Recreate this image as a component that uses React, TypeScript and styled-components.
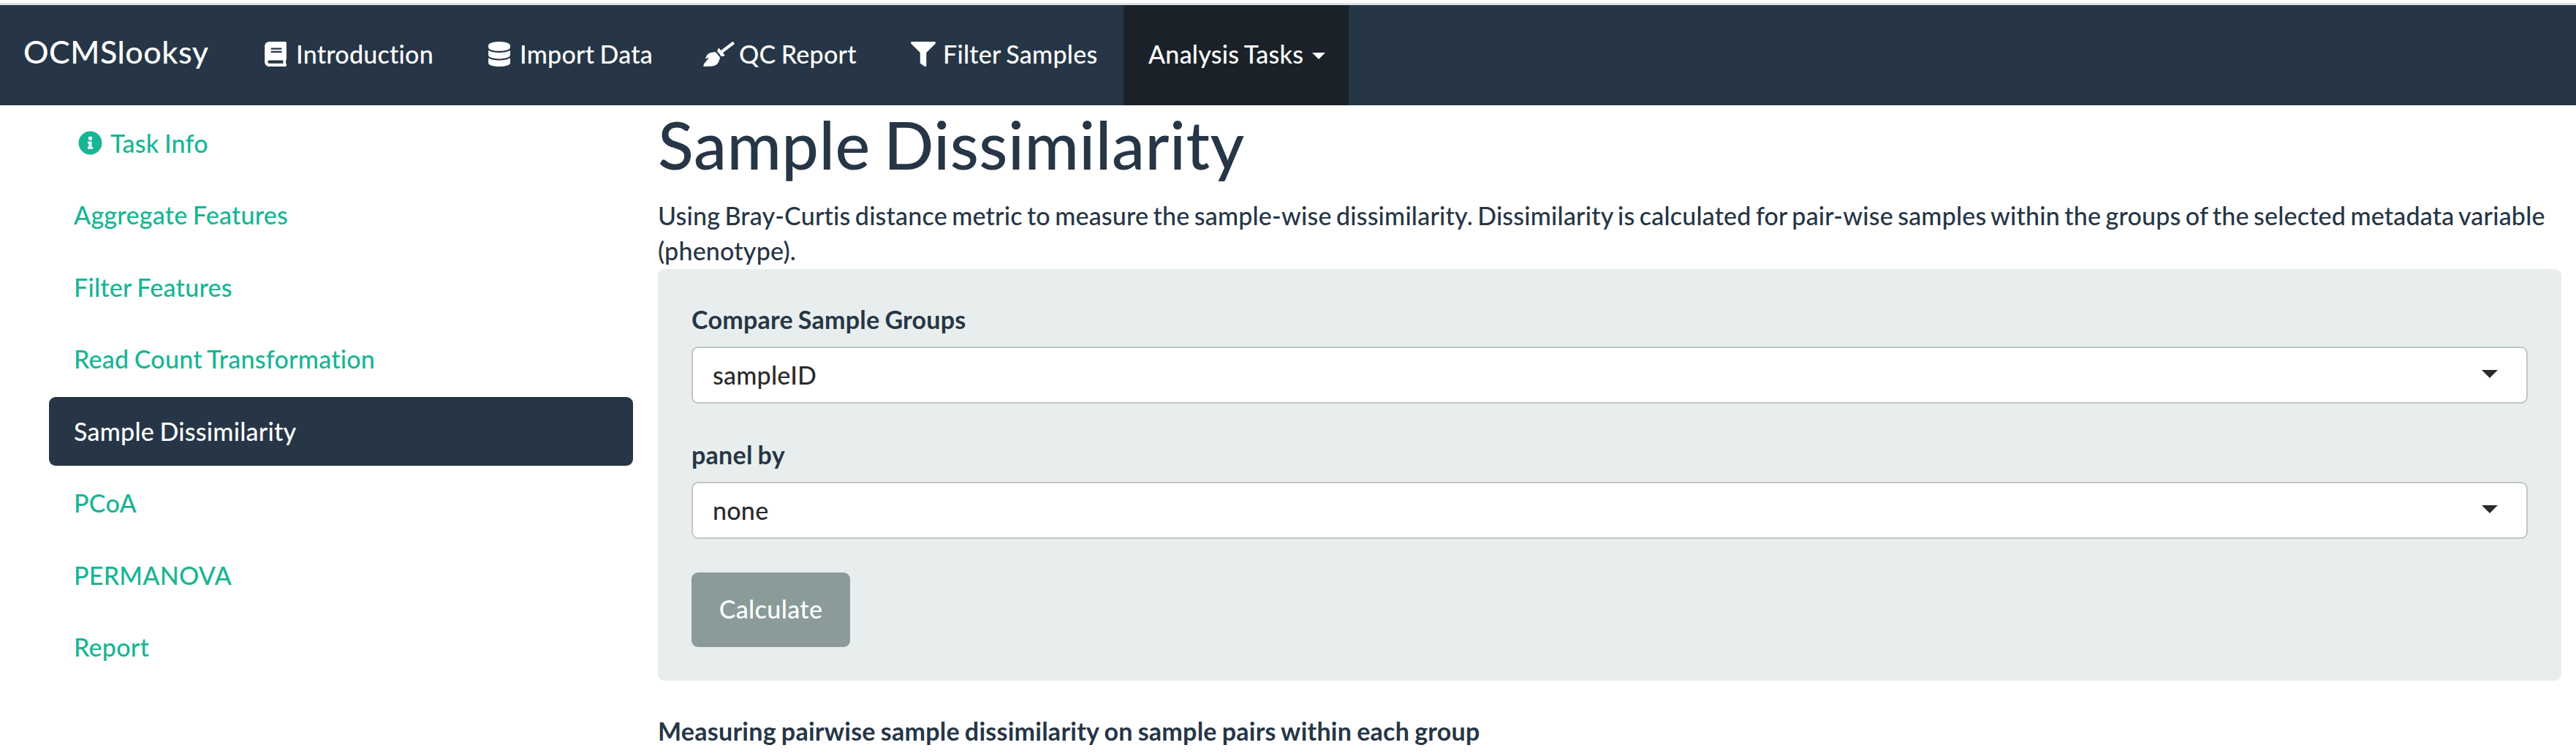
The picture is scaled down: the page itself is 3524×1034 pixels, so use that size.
import React from "react";
import styled, { createGlobalStyle, css } from "styled-components";
import { FaBook, FaBroom, FaDatabase, FaFilter, FaInfoCircle } from "react-icons/fa";

const GlobalStyle = createGlobalStyle`
  * { box-sizing: border-box; }
  body {
    margin: 0;
    background: #fff;
    color: #263646;
    font: 500 34px/48.4px Lato, "Liberation Sans", sans-serif;
    font-variant-ligatures: none;
    letter-spacing: 0.25px;
    word-spacing: -1.5px;
    overflow: hidden;
  }
`;

const TopEdge = styled.div`
  height: 7px;
  background: #fdfcfb;
  border-bottom: 3px solid #dcdfe3;
`;

const Navbar = styled.nav`
  display: flex;
  height: 137px;
  background: #263646;
  color: #fff;
`;

const Brand = styled.a`
  width: 328px;
  padding: 40px 0 0 32px;
  font-size: 43px;
  line-height: 48px;
  letter-spacing: 0.55px;
`;

const NavItem = styled.a<{ $width: number; $active?: boolean }>`
  display: flex;
  align-items: center;
  width: ${(p) => p.$width}px;
  padding: 0 0 3px 34px;
  white-space: nowrap;
  background: ${(p) => (p.$active ? "#1a2129" : "transparent")};
`;

const NavIcon = styled.span<{ $width: number; $gap: number }>`
  display: flex;
  margin-right: ${(p) => p.$gap}px;
  svg {
    display: block;
    width: ${(p) => p.$width}px;
    height: 34px;
  }
`;

const Caret = styled.span<{ $half: number; $height: number }>`
  margin-bottom: 3px;
  border-top: ${(p) => p.$height}px solid currentColor;
  border-left: ${(p) => p.$half}px solid transparent;
  border-right: ${(p) => p.$half}px solid transparent;
`;

const NavCaret = styled(Caret)`
  margin: 4px 0 0 12px;
`;

const Page = styled.div`
  display: grid;
  grid-template-columns: 799px 2604px;
  column-gap: 34px;
  padding-left: 67px;
`;

const Sidebar = styled.ul`
  display: flex;
  flex-direction: column;
  gap: 4.5px;
  margin: 0;
  padding: 5px 0 0;
  list-style: none;
`;

const SideItem = styled.li<{ $active?: boolean }>`
  display: flex;
  align-items: center;
  height: 94px;
  padding: 0 34px;
  border-radius: 9px;
  color: #18b594;
  ${(p) => p.$active && css`
    background: #263646;
    color: #fff;
  `}
`;

const InfoIcon = styled(FaInfoCircle)`
  width: 33px;
  height: 33px;
  margin: 0 11px 2px 6px;
`;

const Title = styled.h1`
  margin: 5px 0 25px;
  font-size: 90px;
  line-height: 97px;
  font-weight: 500;
  letter-spacing: 0.55px;
  word-spacing: -5px;
`;

const Description = styled.p`
  margin: 0;
  height: 97px;
  letter-spacing: 0.2px;
  word-spacing: -2.5px;
`;

const Well = styled.section`
  height: 563px;
  padding: 45px 46px;
  border-radius: 9px;
  background: #e8eeed;
`;

const Label = styled.label`
  display: block;
  height: 61px;
  font-weight: 700;
`;

const SelectBox = styled.div`
  display: flex;
  align-items: center;
  justify-content: space-between;
  height: 78px;
  margin-bottom: 46px;
  padding: 0 39px 0 27px;
  border: 2px solid #c3c5c5;
  border-radius: 9px;
  background: #fff;
  color: #2b2b2b;
`;

const SelectCaret = styled(Caret)`
  margin-bottom: 4px;
`;

const Button = styled.button`
  width: 217px;
  height: 102px;
  padding: 0 0 2px;
  border: 0;
  border-radius: 9px;
  background: #8a9b9a;
  color: #fff;
  font: inherit;
  letter-spacing: 0.4px;
`;

const Subheading = styled.strong`
  display: block;
  margin-top: 45px;
  font-weight: 700;
`;

const navItems = [
  { label: "Introduction", icon: <FaBook />, iconWidth: 30, gap: 13, width: 306 },
  { label: "Import Data", icon: <FaDatabase />, iconWidth: 30, gap: 13, width: 294 },
  { label: "QC Report", icon: <FaBroom />, iconWidth: 43, gap: 6, width: 284 },
  { label: "Filter Samples", icon: <FaFilter />, iconWidth: 34, gap: 10, width: 325 },
];

const tasks = [
  "Aggregate Features",
  "Filter Features",
  "Read Count Transformation",
  "Sample Dissimilarity",
  "PCoA",
  "PERMANOVA",
  "Report",
];

const Field = ({ label, value }: { label: string; value: string }) => (
  <>
    <Label>{label}</Label>
    <SelectBox>
      {value}
      <SelectCaret $half={11} $height={11} />
    </SelectBox>
  </>
);

export default function App() {
  return (
    <>
      <GlobalStyle />
      <TopEdge />
      <Navbar>
        <Brand>OCMSlooksy</Brand>
        {navItems.map((item) => (
          <NavItem key={item.label} $width={item.width}>
            <NavIcon $width={item.iconWidth} $gap={item.gap}>{item.icon}</NavIcon>
            {item.label}
          </NavItem>
        ))}
        <NavItem $width={308} $active>
          Analysis Tasks
          <NavCaret $half={9} $height={9} />
        </NavItem>
      </Navbar>
      <Page>
        <Sidebar>
          <SideItem>
            <InfoIcon />
            Task Info
          </SideItem>
          {tasks.map((task) => (
            <SideItem key={task} $active={task === "Sample Dissimilarity"}>
              {task}
            </SideItem>
          ))}
        </Sidebar>
        <main>
          <Title>Sample Dissimilarity</Title>
          <Description>
            Using Bray-Curtis distance metric to measure the sample-wise dissimilarity. Dissimilarity is
            calculated for pair-wise samples within the groups of the selected metadata variable
            (phenotype).
          </Description>
          <Well>
            <Field label="Compare Sample Groups" value="sampleID" />
            <Field label="panel by" value="none" />
            <Button>Calculate</Button>
          </Well>
          <Subheading>Measuring pairwise sample dissimilarity on sample pairs within each group</Subheading>
        </main>
      </Page>
    </>
  );
}
